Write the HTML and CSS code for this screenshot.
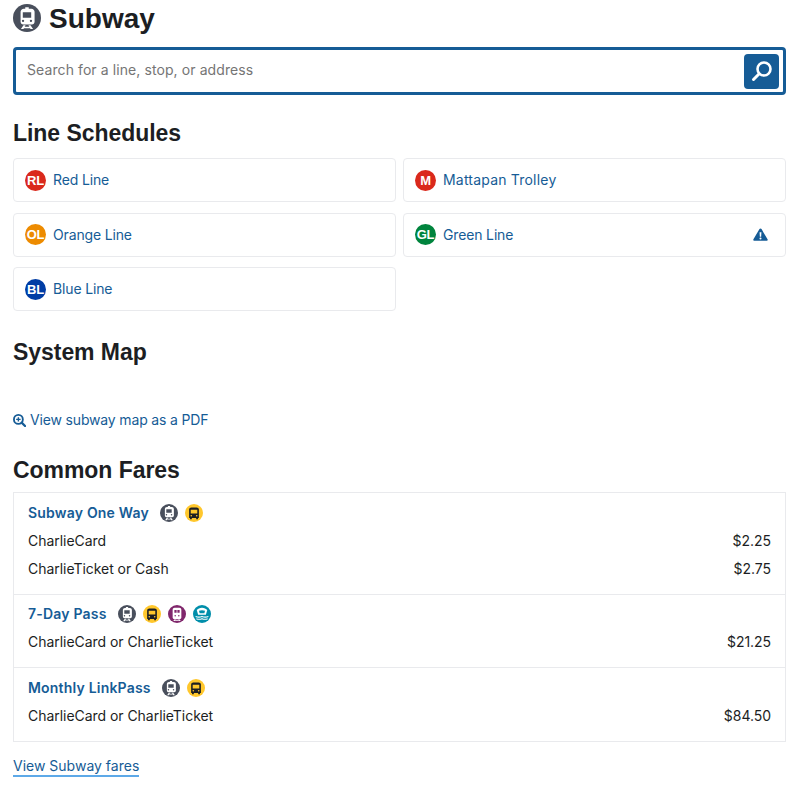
FILE: index.html
```html
<!DOCTYPE html>
<html lang="en">
<head>
<meta charset="utf-8">
<title>Subway</title>
<link rel="stylesheet" href="styles.css">
</head>
<body>
<svg class="defs" width="0" height="0" aria-hidden="true">
  <defs>
    <g id="train">
      <path fill="#fff" fill-rule="evenodd" d="M10.500 2.800h3v1.200h2.300c1.500 0 2.700 1.200 2.700 2.700v8.500c0 1.300-1 2.300-2.300 2.300H8.800c-1.300 0-2.300-1-2.300-2.300V6.700c0-1.500 1.200-2.700 2.700-2.700h1.300zM8.400 7v4.800h7.200V7zM8.600 13.400a1 1 0 1 0 0 2 1 1 0 0 0 0-2zm6.800 0a1 1 0 1 0 0 2 1 1 0 0 0 0-2z"/>
      <path fill="#fff" d="M6.800 21.500l2.200-3.300h1.800l-.8 1.300h4l-.8-1.300h1.800l2.200 3.300H15l-.4-.7H9.400l-.4.7z"/>
    </g>
    <g id="bus">
      <path fill="#1c1e23" fill-rule="evenodd" d="M8.500 4.500h7c1.700 0 3 1.200 3 2.800v11.200h-1.200v1.700h-2.400v-1.700H9.100v1.700H6.700v-1.700H5.500V7.300c0-1.600 1.300-2.800 3-2.800zM7.600 7.500v5.200h8.800V7.500zM8.400 14.600a1.100 1.100 0 1 0 0 2.200 1.100 1.100 0 0 0 0-2.200zm7.200 0a1.100 1.100 0 1 0 0 2.200 1.100 1.100 0 0 0 0-2.200z"/>
    </g>
    <g id="rail">
      <path fill="#fff" fill-rule="evenodd" d="M8.800 3.500h6.400c1.500 0 2.600 1.200 2.600 2.700v10.400c0 1.100-.9 2-2 2H8.200c-1.100 0-2-.9-2-2V6.200c0-1.500 1.100-2.700 2.600-2.700zM8.500 6.500v3.700h3V6.500zm4 0v3.700h3V6.500zM9.600 13.400a1 1 0 1 0 0 2 1 1 0 0 0 0-2zm4.800 0a1 1 0 1 0 0 2 1 1 0 0 0 0-2z"/>
      <path fill="#fff" d="M7 21.400l1.800-2.400h1.500l-.5.8h4.400l-.5-.8h1.500l1.800 2.400H15l-.3-.4H9.300l-.3.4z"/>
    </g>
    <g id="ferry">
      <path fill="#fff" fill-rule="evenodd" d="M12 3.500c3 0 5.600 1.200 7 3.200l-1.800 6.300H6.800L5 6.700C6.400 4.700 9 3.500 12 3.500zM8 7.800l.8 3.200h6.400l.8-3.200c-2.500-1.200-5.500-1.200-8 0z"/>
      <path fill="none" stroke="#fff" stroke-width="1.500" d="M3.500 15.200c2.800 1.300 5.700 1.300 8.500 0 2.800 1.300 5.700 1.300 8.500 0M4.500 18.200c2.500 1.100 5 1.100 7.500 0 2.500 1.100 5 1.100 7.500 0"/>
    </g>
  </defs>
</svg>

<header class="title-row">
  <svg class="title-icon" viewBox="0 0 24 24"><circle cx="12" cy="12" r="12" fill="#494f5c"/><use href="#train"/></svg>
  <h1 class="title">Subway</h1>
</header>

<form class="search">
  <input class="search-input" type="text" placeholder="Search for a line, stop, or address">
  <button class="search-btn" type="button" aria-label="Search">
    <svg viewBox="0 0 24 24" width="24" height="24"><circle cx="14" cy="10" r="6.500" fill="none" stroke="#fff" stroke-width="2.600"/><path d="M9.200 14.800L3.500 20.500" stroke="#fff" stroke-width="3" stroke-linecap="round"/></svg>
  </button>
</form>

<h2 class="section-title">Line Schedules</h2>
<div class="lines">
  <a class="line" href="#"><span class="badge red">RL</span><span class="line-name">Red Line</span></a>
  <a class="line" href="#"><span class="badge red">M</span><span class="line-name line-name-wide">Mattapan Trolley</span></a>
  <a class="line" href="#"><span class="badge orange">OL</span><span class="line-name">Orange Line</span></a>
  <a class="line" href="#"><span class="badge green">GL</span><span class="line-name">Green Line</span>
    <svg class="alert" viewBox="0 0 16 14" width="15" height="13"><path fill="#165c96" fill-rule="evenodd" d="M8 .5c.5 0 .9.300 1.100.700l6.500 10.800c.5.800-.1 1.700-1 1.700H1.400c-.9 0-1.500-.9-1-1.700L6.900 1.200C7.100.8 7.500.5 8 .5zM7 4.500l.3 4.800h1.400L9 4.500zM8 10.200a1.100 1.100 0 1 0 0 2.200 1.100 1.100 0 0 0 0-2.200z"/></svg>
  </a>
  <a class="line" href="#"><span class="badge blue">BL</span><span class="line-name">Blue Line</span></a>
</div>

<h2 class="section-title map-title">System Map</h2>
<a class="pdf-link" href="#">
  <svg viewBox="0 0 14 14" width="13" height="13"><circle cx="5.800" cy="5.800" r="4.800" fill="none" stroke="#165c96" stroke-width="2"/><path d="M9.300 9.300L13 13" stroke="#165c96" stroke-width="2.400" stroke-linecap="round"/><path d="M3.400 5.800h4.800M5.800 3.400v4.800" stroke="#165c96" stroke-width="1.500"/></svg>
  <span>View subway map as a PDF</span>
</a>

<h2 class="section-title fares-title">Common Fares</h2>
<div class="fares">
  <section class="fare">
    <div class="fare-head"><a class="fare-name" href="#">Subway One Way</a>
      <svg class="mode" viewBox="0 0 24 24"><circle cx="12" cy="12" r="12" fill="#494f5c"/><use href="#train"/></svg>
      <svg class="mode" viewBox="0 0 24 24"><circle cx="12" cy="12" r="12" fill="#ffc72c"/><use href="#bus"/></svg>
    </div>
    <div class="fare-row"><span>CharlieCard</span><span>$2.25</span></div>
    <div class="fare-row"><span>CharlieTicket or Cash</span><span>$2.75</span></div>
  </section>
  <section class="fare">
    <div class="fare-head"><a class="fare-name" href="#">7-Day Pass</a>
      <svg class="mode" viewBox="0 0 24 24"><circle cx="12" cy="12" r="12" fill="#494f5c"/><use href="#train"/></svg>
      <svg class="mode" viewBox="0 0 24 24"><circle cx="12" cy="12" r="12" fill="#ffc72c"/><use href="#bus"/></svg>
      <svg class="mode" viewBox="0 0 24 24"><circle cx="12" cy="12" r="12" fill="#80276c"/><use href="#rail"/></svg>
      <svg class="mode" viewBox="0 0 24 24"><circle cx="12" cy="12" r="12" fill="#008eaa"/><use href="#ferry"/></svg>
    </div>
    <div class="fare-row"><span>CharlieCard or CharlieTicket</span><span>$21.25</span></div>
  </section>
  <section class="fare">
    <div class="fare-head"><a class="fare-name" href="#">Monthly LinkPass</a>
      <svg class="mode" viewBox="0 0 24 24"><circle cx="12" cy="12" r="12" fill="#494f5c"/><use href="#train"/></svg>
      <svg class="mode" viewBox="0 0 24 24"><circle cx="12" cy="12" r="12" fill="#ffc72c"/><use href="#bus"/></svg>
    </div>
    <div class="fare-row"><span>CharlieCard or CharlieTicket</span><span>$84.50</span></div>
  </section>
</div>
<a class="fares-link" href="#">View Subway fares</a>
</body>
</html>
```
FILE: styles.css
```css
* { box-sizing: border-box; }
html, body { margin: 0; }
body {
  padding: 0 13px;
  font-family: Inter, "Liberation Sans", sans-serif;
  font-size: 14px;
  line-height: 20px;
  color: #1c1e23;
  background: #fff;
  height: 790px;
  overflow: hidden;
}
a { color: #165c96; text-decoration: none; }
.defs { position: absolute; }

.title-row { display: flex; align-items: center; gap: 8px; height: 37px; }
.title-icon { width: 28px; height: 28px; flex: none; margin-top: -1px; }
.title {
  margin: 0;
  font: 700 28px/37px "Liberation Sans", sans-serif;
}

.search {
  display: flex;
  align-items: center;
  height: 48px;
  margin-top: 10px;
  padding: 0 4px 0 11px;
  border: 3px solid #165c96;
  border-radius: 4px;
}
.search-input {
  flex: 1;
  min-width: 0;
  border: 0;
  outline: 0;
  padding: 0 0 4px;
  font: 14px Inter, sans-serif;
  letter-spacing: .09px;
  color: #1c1e23;
}
.search-input::placeholder { color: #757575; opacity: 1; }
.search-btn {
  display: flex;
  align-items: center;
  justify-content: center;
  width: 35px;
  height: 35px;
  padding: 0;
  border: 0;
  border-radius: 4px;
  background: #165c96;
}

.section-title {
  margin: 24px 0 11px;
  font: 700 23px/28px "Liberation Sans", sans-serif;
  letter-spacing: -.05px;
}

.lines {
  display: grid;
  grid-template-columns: 1fr 1fr;
  column-gap: 7px;
  row-gap: 10.500px;
}
.line {
  display: flex;
  align-items: center;
  height: 44px;
  padding: 0 11px;
  border: 1px solid #e9eaed;
  border-radius: 4px;
}
.line-name { letter-spacing: -.15px; }
.line-name-wide { letter-spacing: .2px; }
.badge {
  display: flex;
  align-items: center;
  justify-content: center;
  width: 21px;
  height: 21px;
  margin-right: 7px;
  flex: none;
  border-radius: 50%;
  color: #fff;
  font: 700 13px/21px "Liberation Sans", sans-serif;
  letter-spacing: -.2px;
}
.red { background: #da291c; }
.orange { background: #ed8b00; }
.green { background: #00843d; }
.blue { background: #003da5; }
.alert { margin-left: auto; margin-right: 6px; }

.map-title { margin: 27px 0 0; }
.pdf-link {
  display: flex;
  align-items: center;
  gap: 4px;
  margin-top: 44px;
  letter-spacing: -.16px;
}
.fares-title { margin: 26px 0 8px; }

.fares { border: 1px solid #e9eaed; }
.fare { padding: 9px 14px 10.500px; border-top: 1px solid #e9eaed; }
.fare:first-child { border-top: 0; }
.fare:nth-child(2) { padding-top: 8.500px; padding-bottom: 11px; }
.fare-head { display: flex; align-items: center; gap: 7px; height: 22px; margin-bottom: 3px; }
.fare-name { font-weight: 600; letter-spacing: .2px; margin-right: 4px; }
.mode { width: 18px; height: 18px; }
.fare-row { display: flex; justify-content: space-between; height: 28px; align-items: center; letter-spacing: -.04px; }
.fares-link {
  display: inline-block;
  margin-top: 14px;
  border-bottom: 2px solid #5da9e8;
  line-height: 19px;
}
```
